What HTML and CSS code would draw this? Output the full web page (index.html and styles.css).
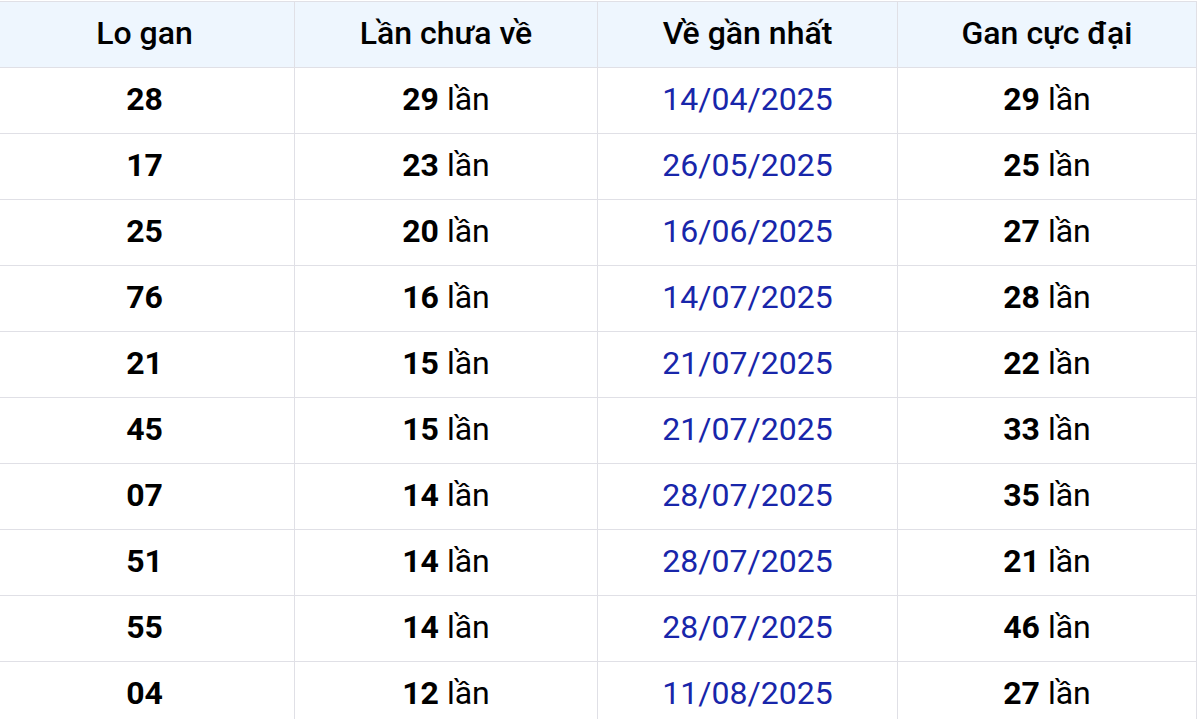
FILE: index.html
```html
<!DOCTYPE html>
<html lang="vi">
<head>
<meta charset="utf-8">
<title>Lo gan</title>
<link rel="stylesheet" href="styles.css">
</head>
<body>
<table class="gan-table">
  <colgroup>
    <col class="c1"><col class="c2"><col class="c3"><col class="c4">
  </colgroup>
  <thead>
    <tr><th>Lo gan</th><th>Lần chưa về</th><th>Về gần nhất</th><th>Gan cực đại</th></tr>
  </thead>
  <tbody>
    <tr><td class="num">28</td><td><b>29</b> lần</td><td class="date">14/04/2025</td><td><b>29</b> lần</td></tr>
    <tr><td class="num">17</td><td><b>23</b> lần</td><td class="date">26/05/2025</td><td><b>25</b> lần</td></tr>
    <tr><td class="num">25</td><td><b>20</b> lần</td><td class="date">16/06/2025</td><td><b>27</b> lần</td></tr>
    <tr><td class="num">76</td><td><b>16</b> lần</td><td class="date">14/07/2025</td><td><b>28</b> lần</td></tr>
    <tr><td class="num">21</td><td><b>15</b> lần</td><td class="date">21/07/2025</td><td><b>22</b> lần</td></tr>
    <tr><td class="num">45</td><td><b>15</b> lần</td><td class="date">21/07/2025</td><td><b>33</b> lần</td></tr>
    <tr><td class="num">07</td><td><b>14</b> lần</td><td class="date">28/07/2025</td><td><b>35</b> lần</td></tr>
    <tr><td class="num">51</td><td><b>14</b> lần</td><td class="date">28/07/2025</td><td><b>21</b> lần</td></tr>
    <tr><td class="num">55</td><td><b>14</b> lần</td><td class="date">28/07/2025</td><td><b>46</b> lần</td></tr>
    <tr><td class="num">04</td><td><b>12</b> lần</td><td class="date">11/08/2025</td><td><b>27</b> lần</td></tr>
  </tbody>
</table>
</body>
</html>
```
FILE: styles.css
```css
html, body {
  margin: 0;
  padding: 0;
  background: #ffffff;
  overflow: hidden;
}
body {
  font-family: Roboto, "Noto Sans", sans-serif;
  color: #000;
}
.gan-table {
  width: 1202px;
  margin: 1px 0 0 -6px;
  border-collapse: collapse;
  table-layout: fixed;
  font-size: 32px;
}
.gan-table .c1 { width: 300px; }
.gan-table .c2 { width: 303px; }
.gan-table .c3 { width: 300px; }
.gan-table .c4 { width: 299px; }
.gan-table th,
.gan-table td {
  border: 1px solid #e0e0e6;
  height: 66px;
  padding: 0 0 3px 0;
  text-align: center;
  vertical-align: middle;
  box-sizing: border-box;
}
.gan-table th {
  background: #eef6fe;
  font-weight: 500;
  color: #000;
}
.gan-table td {
  font-weight: 400;
}
.gan-table td b,
.gan-table td.num {
  font-weight: 700;
}
.gan-table td.date {
  color: #1826aa;
}
```
